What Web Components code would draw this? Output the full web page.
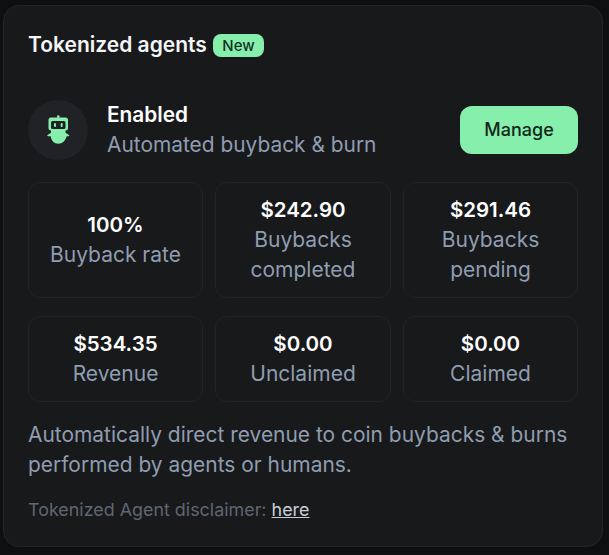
<!DOCTYPE html>
<html><head><meta charset="utf-8"><style>
html,body{margin:0;padding:0;background:#0e0f10;}
body{width:609px;height:555px;overflow:hidden;font-family:Inter,"Liberation Sans",sans-serif;}
</style></head><body>
<agent-card>
  <agent-status slot="status"></agent-status>
  <stat-box slot="row1" value="100%" label="Buyback rate"></stat-box>
  <stat-box slot="row1" value="$242.90" label="Buybacks completed"></stat-box>
  <stat-box slot="row1" value="$291.46" label="Buybacks pending"></stat-box>
  <stat-box slot="row2" value="$534.35" label="Revenue"></stat-box>
  <stat-box slot="row2" value="$0.00" label="Unclaimed"></stat-box>
  <stat-box slot="row2" value="$0.00" label="Claimed"></stat-box>
</agent-card>
<script>
class AgentCard extends HTMLElement{constructor(){super();this.attachShadow({mode:'open'}).innerHTML=`<style>
:host{display:block;box-sizing:border-box;width:600px;height:542px;margin:5px 0 0 3px;padding:23px 24px 0 24px;background:#18191b;border:1px solid #232428;border-radius:16px;}
.head{display:flex;align-items:center;gap:6px;height:32px;}
h2{margin:0;font-size:21px;line-height:32px;font-weight:600;color:#f4f5f7;}
.badge{display:block;background:#86efac;color:#14321f;font-size:15px;font-weight:500;line-height:23px;height:23px;padding:0 9.500px;border-radius:8px;}
.status{margin-top:39px}
.row{display:grid;grid-template-columns:175px 176px 175px;column-gap:12px;}
.r1{margin-top:22px}.r2{margin-top:18px}
p{margin:18px 0 0;font-size:20.950px;line-height:30px;color:#8f9db0;}
.dis{margin-top:18px;font-size:17.900px;line-height:24px;color:#5f6673;}
a{color:#c9ced6;text-decoration:underline;}
</style><div class="head"><h2>Tokenized agents</h2><span class="badge">New</span></div>
<div class="status"><slot name="status"></slot></div>
<div class="row r1"><slot name="row1"></slot></div>
<div class="row r2"><slot name="row2"></slot></div>
<p>Automatically direct revenue to coin buybacks &amp; burns performed by agents or humans.</p>
<div class="dis">Tokenized Agent disclaimer: <a href="#">here</a></div>`}}
class AgentStatus extends HTMLElement{constructor(){super();this.attachShadow({mode:'open'}).innerHTML=`<style>
:host{display:flex;align-items:center;height:60px;}
.ic{width:60px;height:60px;border-radius:50%;background:#202226;display:flex;align-items:center;justify-content:center;flex:none;margin-right:19px}
.t{flex:1;min-width:0}
.a{font-size:20.800px;line-height:30px;font-weight:600;color:#fff}
.b{font-size:20.900px;line-height:30px;color:#8f9db0}
button{width:118px;height:48px;border:0;border-radius:12px;background:#86efac;color:#12261a;font:500 18px/28px Inter,sans-serif;padding:0}
</style><div class="ic"><svg width="24" height="30" viewBox="0 0 24 30" fill="#86efac"><circle cx="12.300" cy="1.500" r="1.300"/><rect x="11.500" y="1.500" width="1.600" height="1.500"/><path fill-rule="evenodd" d="M5 2.500h14.500a2.500 2.500 0 0 1 2.500 2.500v8a2.500 2.500 0 0 1-2.500 2.500H5A2.500 2.500 0 0 1 2.500 13V5A2.500 2.500 0 0 1 5 2.500ZM6.500 6A1.500 1.500 0 0 0 5 7.500v5A1.500 1.500 0 0 0 6.500 14h11.500a1.500 1.500 0 0 0 1.500-1.500v-5A1.500 1.500 0 0 0 18 6Z"/><rect x="8" y="8" width="2" height="4" rx="1"/><rect x="14.700" y="8" width="2" height="4" rx="1"/><path d="M5 15h14.500v2.700l3.400 2.200a.7.700 0 0 1-.4 1.300h-1.800C19.400 25.700 16.500 28.700 12.300 28.700S5.100 25.700 4.800 21.200H2a.7.700 0 0 1-.4-1.300L5 17.700Z"/></svg></div>
<div class="t"><div class="a">Enabled</div><div class="b">Automated buyback &amp; burn</div></div>
<button>Manage</button>`}}
class StatBox extends HTMLElement{constructor(){super();this.attachShadow({mode:'open'}).innerHTML=`<style>
:host{display:flex;flex-direction:column;align-items:center;justify-content:center;box-sizing:border-box;padding:12px;min-height:86px;border:1px solid #222326;border-radius:12px;text-align:center;}
.v{font-size:20.500px;line-height:30px;font-weight:600;color:#fff}
.l{font-size:21px;line-height:30px;color:#8f9db0}
</style><div class="v"></div><div class="l"></div>`;}
connectedCallback(){const s=this.shadowRoot;s.querySelector('.v').textContent=this.getAttribute('value');s.querySelector('.l').textContent=this.getAttribute('label');}}
customElements.define('agent-card',AgentCard);customElements.define('agent-status',AgentStatus);customElements.define('stat-box',StatBox);
</script></body></html>
